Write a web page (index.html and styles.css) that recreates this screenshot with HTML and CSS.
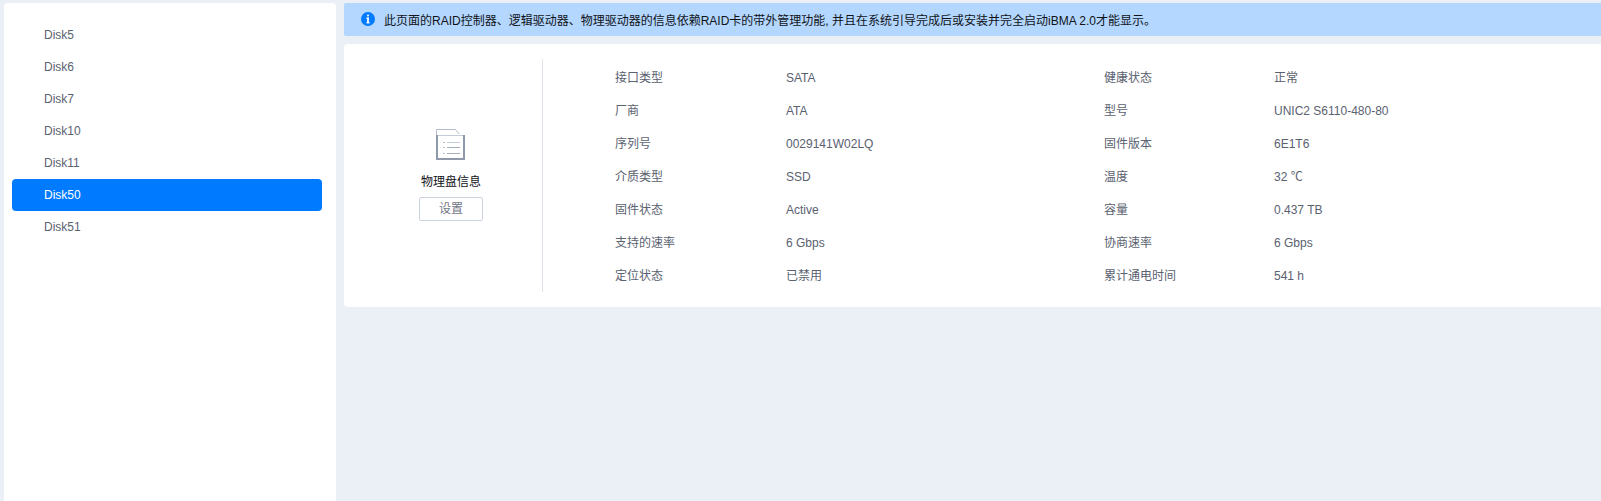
FILE: index.html
```html
<!DOCTYPE html>
<html lang="zh-CN">
<head>
<meta charset="utf-8">
<title>物理盘信息</title>
<link rel="stylesheet" href="styles.css">
</head>
<body>
<div class="page">
  <aside class="sidebar">
    <ul class="disk-list">
      <li class="disk">Disk5</li>
      <li class="disk">Disk6</li>
      <li class="disk">Disk7</li>
      <li class="disk">Disk10</li>
      <li class="disk">Disk11</li>
      <li class="disk selected">Disk50</li>
      <li class="disk">Disk51</li>
    </ul>
  </aside>
  <main class="main">
    <div class="notice">
      <svg class="info-icon" viewBox="0 0 14 14" width="14" height="14"><circle cx="7" cy="7" r="7" fill="#007aff"/><rect x="6" y="2.6" width="2" height="2" rx="1" fill="#fff"/><rect x="6.1" y="5.6" width="1.8" height="5.6" fill="#fff"/><rect x="5.2" y="5.6" width="2.7" height="1" fill="#fff"/><rect x="5.2" y="10.3" width="3.6" height="1" fill="#fff"/></svg>
      <span class="notice-text">此页面的RAID控制器、逻辑驱动器、物理驱动器的信息依赖RAID卡的带外管理功能, 并且在系统引导完成后或安装并完全启动iBMA 2.0才能显示。</span>
    </div>
    <section class="panel">
      <div class="summary">
        <svg class="disk-icon" viewBox="0 0 30 31" width="30" height="31">
          <path d="M.5 6.5V.5H19.5L23 5" fill="none" stroke="#b4bbca" stroke-width="1"/>
          <path d="M0 6.5H29" stroke="#c5cbd8" stroke-width="1"/>
          <path d="M1 6V30H28V6" fill="none" stroke="#8f99aa" stroke-width="2"/>
          <path d="M7 13.5h2M7 18.5h2M7 24.5h2" stroke="#b4bbca" stroke-width="1"/>
          <path d="M11 13.5H24" stroke="#c5cbd8" stroke-width="1"/>
          <path d="M11 18.5H24M11 24.5H24" stroke="#a5adbb" stroke-width="1"/>
        </svg>
        <div class="summary-title">物理盘信息</div>
        <button class="settings-btn" type="button">设置</button>
      </div>
      <div class="details">
        <span class="label">接口类型</span><span class="value">SATA</span><span class="label">健康状态</span><span class="value">正常</span>
        <span class="label">厂商</span><span class="value">ATA</span><span class="label">型号</span><span class="value">UNIC2 S6110-480-80</span>
        <span class="label">序列号</span><span class="value">0029141W02LQ</span><span class="label">固件版本</span><span class="value">6E1T6</span>
        <span class="label">介质类型</span><span class="value">SSD</span><span class="label">温度</span><span class="value">32 ℃</span>
        <span class="label">固件状态</span><span class="value">Active</span><span class="label">容量</span><span class="value">0.437 TB</span>
        <span class="label">支持的速率</span><span class="value">6 Gbps</span><span class="label">协商速率</span><span class="value">6 Gbps</span>
        <span class="label">定位状态</span><span class="value">已禁用</span><span class="label">累计通电时间</span><span class="value">541 h</span>
      </div>
    </section>
  </main>
</div>
</body>
</html>
```

FILE: styles.css
```css
* { box-sizing: border-box; }
html, body { margin: 0; height: 100%; overflow: hidden; }
body {
  background: #ebeff6;
  font-family: "Liberation Sans", "Noto Sans CJK SC", sans-serif;
  font-size: 12px;
  color: #5a6170;
}
.page {
  display: flex;
  width: 1620px;
  height: 501px;
  padding: 3px 0 0 4px;
  gap: 8px;
}
.sidebar {
  flex: 0 0 332px;
  height: 510px;
  background: #fff;
  border-radius: 4px;
  padding: 16px 14px 0 8px;
}
.disk-list { list-style: none; margin: 0; padding: 0; }
.disk {
  height: 32px;
  line-height: 32px;
  padding-left: 32px;
  border-radius: 4px;
}
.disk.selected { background: #007aff; color: #fff; }
.main { flex: 1; min-width: 0; }
.notice {
  display: flex;
  align-items: center;
  height: 33px;
  padding-left: 17px;
  gap: 9px;
  background: #b3d7ff;
  border-radius: 2px;
  color: #111318;
}
.info-icon { flex: none; margin-top: -1px; }
.notice-text { line-height: 16px; padding-top: 2px; }
.panel {
  display: flex;
  margin-top: 8px;
  height: 263px;
  padding: 15px 0 15px 16px;
  background: #fff;
  border-radius: 4px;
}
.summary {
  flex: 0 0 183px;
  border-right: 1px solid #dfe3ea;
  display: flex;
  flex-direction: column;
  align-items: center;
  padding-top: 70px;
}
.disk-icon { display: block; }
.summary-title {
  margin-top: 13px;
  line-height: 18px;
  color: #111318;
}
.settings-btn {
  margin-top: 6px;
  width: 64px;
  height: 24px;
  padding: 0;
  background: #fff;
  border: 1px solid #ccd3e0;
  border-radius: 2px;
  font: inherit;
  line-height: 16px;
  color: #6f7685;
}
.details {
  flex: 1;
  display: grid;
  grid-template-columns: 171px 318px 170px 1fr;
  grid-auto-rows: 33px;
  align-items: center;
  padding: 2px 0 0 72px;
  line-height: 16px;
}
```
